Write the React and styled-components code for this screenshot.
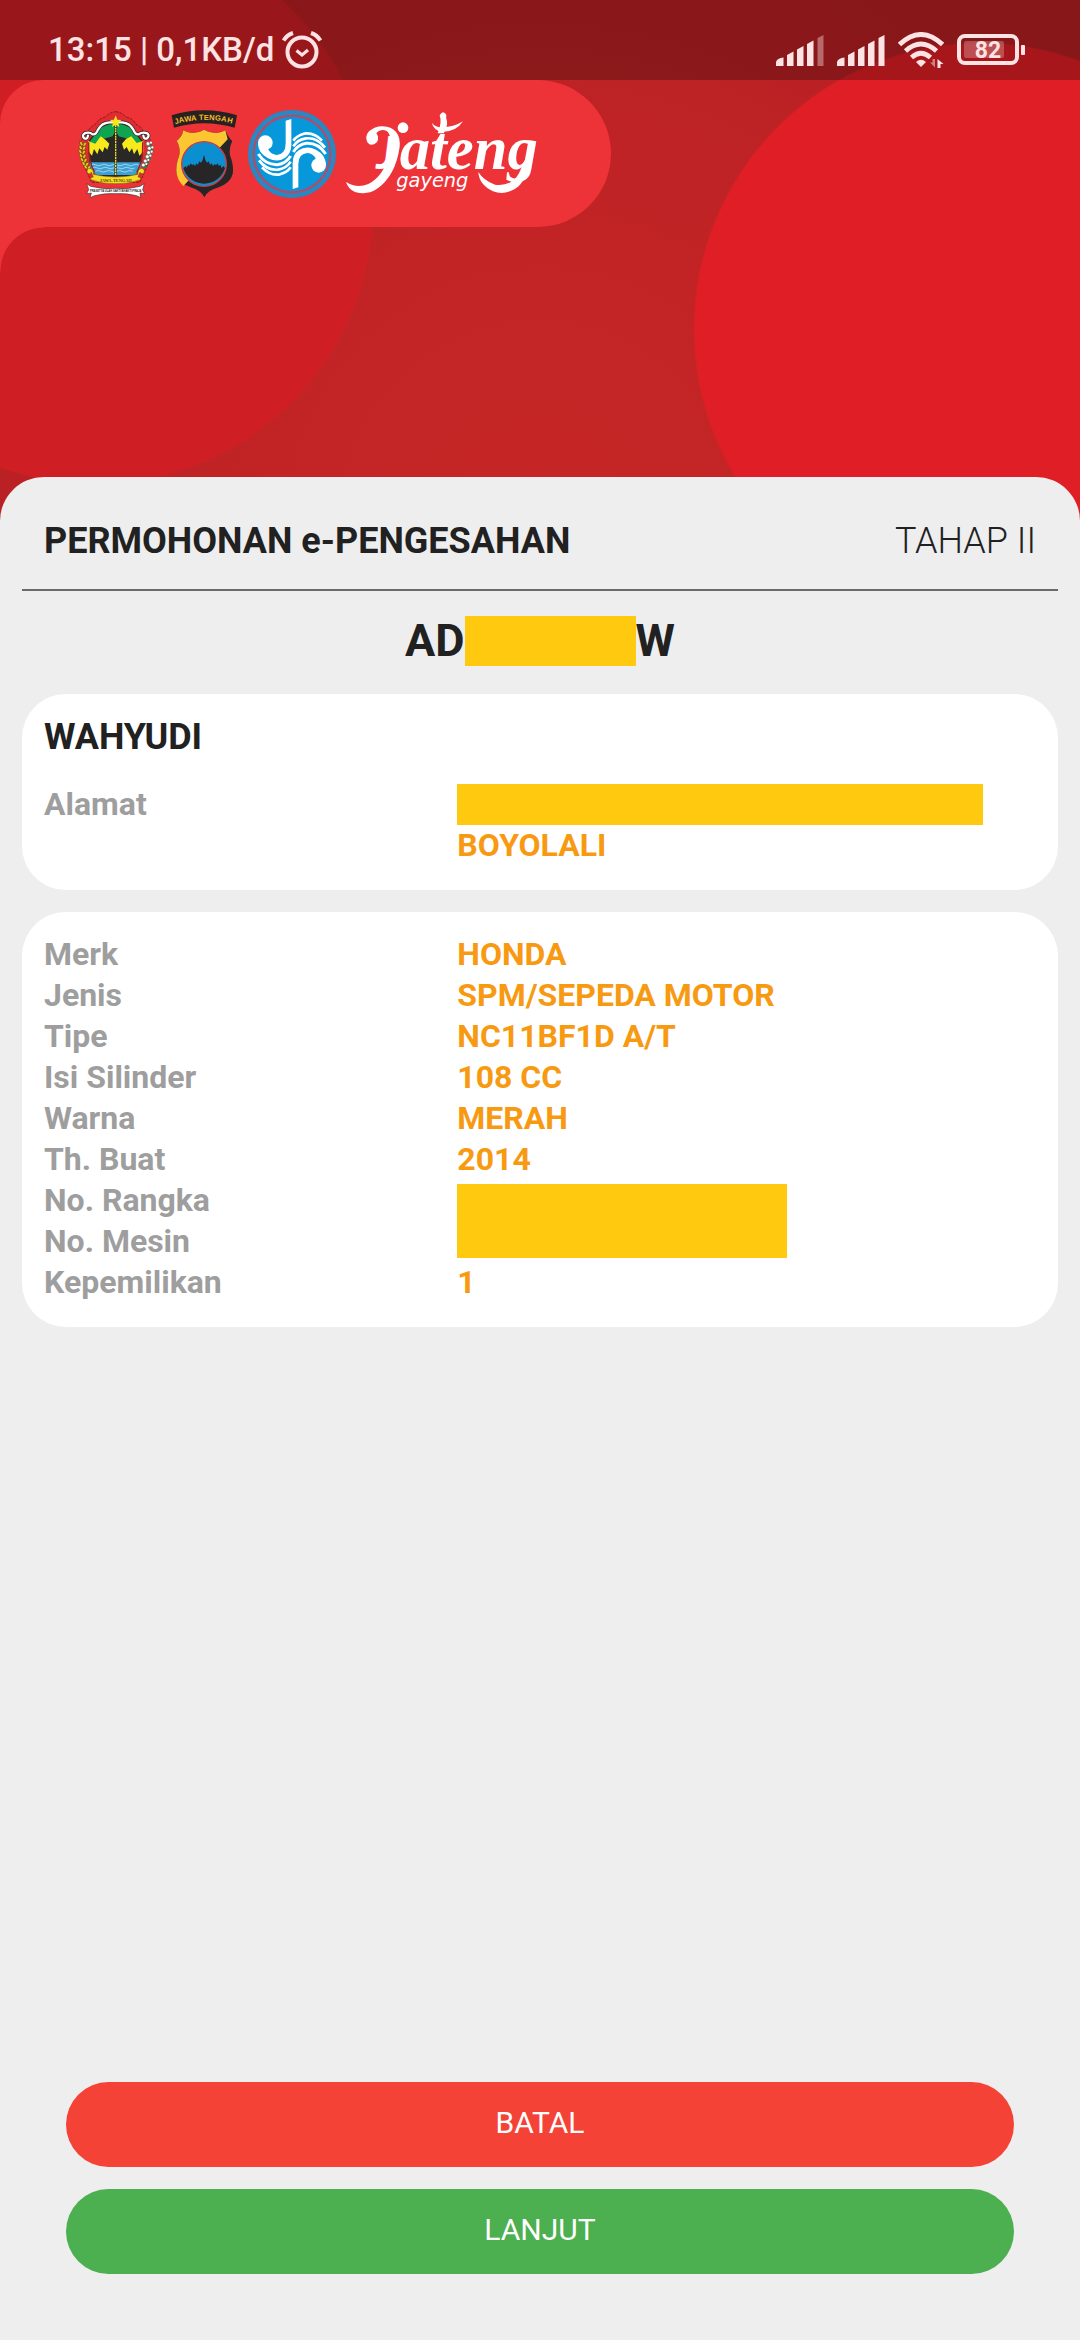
import React from "react";
import styled, { createGlobalStyle } from "styled-components";

const color = {
  sheet: "#eeeeee",
  card: "#ffffff",
  ink: "#212121",
  label: "#9e9e9e",
  value: "#f79a12",
  mask: "#fec90f",
  pill: "#ee3338",
  status: "#fde3e4",
  danger: "#f44336",
  success: "#4caf50",
};

const GlobalStyle = createGlobalStyle`
  * { box-sizing: border-box; }
  body {
    margin: 0;
    font-family: Roboto, "Liberation Sans", sans-serif;
    color: ${color.ink};
  }
`;

const Page = styled.div`
  min-height: 100vh;
  display: flex;
  flex-direction: column;
  background:
    radial-gradient(circle at right 100px top 329px, #e01e25 285px, transparent 287px),
    radial-gradient(circle at 95px 206px, #cf1f24 277px, transparent 279px),
    radial-gradient(circle at 50% 520px, #c62626 0, #c22425 280px, #b82024 620px);
`;

const StatusBar = styled.header`
  height: 80px;
  padding: 20px 55px 0 48px;
  display: flex;
  align-items: center;
  justify-content: space-between;
  background: rgba(0, 0, 0, 0.26);
  color: ${color.status};
`;

const StatusGroup = styled.div`
  display: flex;
  align-items: center;
  gap: ${(p) => p.$gap}px;
`;

const StatusText = styled.span`
  font-size: 33px;
  line-height: 40px;
  font-weight: 500;
`;

const Hero = styled.div`
  height: 397px;
`;

const LogoPill = styled.div`
  position: relative;
  width: 611px;
  max-width: 100%;
  height: 147px;
  padding-left: 78px;
  display: flex;
  align-items: center;
  background: ${color.pill};
  border-radius: 44px 74px 74px 0;

  &::after {
    content: "";
    position: absolute;
    left: 0;
    top: 100%;
    width: 44px;
    height: 44px;
    background: radial-gradient(circle at 100% 100%, transparent 43px, ${color.pill} 44px);
  }
`;

const LogoRow = styled.div`
  display: flex;
  align-items: center;
  gap: 10px;

  svg { overflow: visible; }
`;

const Sheet = styled.main`
  flex: 1;
  display: flex;
  flex-direction: column;
  padding: 16px 22px 66px;
  background: ${color.sheet};
  border-radius: 44px 44px 0 0;
`;

const TitleRow = styled.div`
  height: 98px;
  padding: 0 22px;
  display: flex;
  align-items: center;
  justify-content: space-between;
  border-bottom: 2px solid #6a6a6a;
`;

const Title = styled.h1`
  margin: 0;
  font-size: 36px;
  line-height: 42px;
  font-weight: 700;
`;

const Step = styled.span`
  font-size: 36px;
  line-height: 42px;
  font-weight: 300;
`;

const Plate = styled.div`
  margin: 25px 0 28px;
  display: flex;
  align-items: center;
  justify-content: center;
  font-size: 45px;
  line-height: 50px;
  font-weight: 700;
`;

const Mask = styled.span`
  display: block;
  width: ${(p) => p.$width}px;
  max-width: 100%;
  height: ${(p) => p.$height}px;
  background: ${color.mask};
`;

const Cards = styled.div`
  display: flex;
  flex-direction: column;
  gap: 22px;
`;

const Card = styled.section`
  padding: 22px 22px 24px;
  background: ${color.card};
  border-radius: 44px;
`;

const Owner = styled.h2`
  margin: 0 0 26px;
  font-size: 36px;
  line-height: 42px;
  font-weight: 700;
`;

const Details = styled.dl`
  margin: 0;
  display: grid;
  grid-template-columns: 5fr 7fr;
  font-size: 32px;
  line-height: 41px;
  font-weight: 700;
`;

const Term = styled.dt`
  grid-column: 1;
  color: ${color.label};
`;

const Value = styled.dd`
  grid-column: 2;
  grid-row-end: span ${(p) => p.$rows || 1};
  align-self: center;
  margin: 0;
  color: ${color.value};
`;

const Actions = styled.div`
  margin-top: auto;
  padding: 0 44px;
  display: flex;
  flex-direction: column;
  gap: 22px;
`;

const ActionButton = styled.button`
  height: 85px;
  padding: 0 0 4px;
  border: 0;
  border-radius: 43px;
  background: ${(p) => p.$color};
  color: #ffffff;
  font-family: inherit;
  font-size: 30px;
  font-weight: 400;
  cursor: pointer;
`;

function AlarmIcon() {
  return (
    <svg width="40" height="38" viewBox="0 0 40 38" fill="none" stroke="currentColor">
      <circle cx="20" cy="21" r="14.5" strokeWidth="4" />
      <path d="M1.500 9.500Q5 4 11 2M38.500 9.500Q35 4 29 2" strokeWidth="4" />
      <path d="M14.500 19.500l5.500 4.500 6-5" strokeWidth="3.200" />
    </svg>
  );
}

function SignalIcon({ weak }) {
  return (
    <svg width="48" height="32" viewBox="0 0 48 32" fill="currentColor">
      <path d="M0 32V28Q1 24 7.500 23.500V32Z" />
      <path d="M11 32V21l6.500-3.500V32Z" />
      <path d="M21 32V15.500l6.500-3.500V32Z" />
      <path d="M31 32V10l6.500-3.500V32Z" />
      <path d="M41.500 32V4L47.500 1V32Z" opacity={weak ? 0.4 : 1} />
    </svg>
  );
}

function WifiIcon() {
  return (
    <svg width="46" height="36" viewBox="0 0 46 36" fill="none" stroke="currentColor" strokeWidth="4.800">
      <path d="M1.500 12.500Q23-7.500 44.500 12.500" />
      <path d="M7.500 19Q23 5 38.500 19" />
      <path d="M13.500 25.500Q23 17 32.500 25.500" />
      <path d="M18 30q5-4.500 10 0l-5 5z" fill="currentColor" stroke="none" />
      <path d="M37 27v8.500L32 30.500h2.500V27Z" fill="currentColor" stroke="none" opacity="0.5" />
      <path d="M39.500 36V27l6 5H42.500v4Z" fill="currentColor" stroke="none" />
    </svg>
  );
}

function BatteryIcon() {
  return (
    <svg width="68" height="32" viewBox="0 0 68 32">
      <rect x="2" y="2" width="58" height="27" rx="6" fill="none" stroke="currentColor" strokeWidth="4" />
      <rect x="7" y="7" width="40" height="17" rx="2" fill="currentColor" opacity="0.28" />
      <rect x="64" y="11" width="4" height="10" rx="1" fill="currentColor" />
      <text x="31" y="24" textAnchor="middle" fontFamily="Roboto, sans-serif" fontSize="23" fontWeight="700" fill="currentColor">
        82
      </text>
    </svg>
  );
}

const riceGrains = [
  [64, 146], [62, 158], [61, 170], [63, 182], [66, 194], [71, 206], [77, 216],
];
const cottonBolls = [
  [268, 146], [272, 160], [270, 173], [266, 185], [260, 198], [254, 210],
];

function ProvinceEmblem() {
  return (
    <svg width="78" height="90" viewBox="54 42 234 270" role="img" aria-label="Jawa Tengah">
      <path
        d="M167 50Q186 52 198 66Q218 70 228 88Q246 96 252 114L276 140L262 212L240 262H95L72 212L60 140L82 114Q88 96 106 88Q116 70 136 66Q148 52 167 50Z"
        fill="#e02c30" stroke="#5b1416" strokeWidth="2" strokeDasharray="9 3"
      />
      <path d="M84 140L110 106L140 88L167 84L194 88L224 106L250 140L246 205L222 245H112L88 205Z" fill="#2a2826" />
      <path d="M88 142Q112 108 122 98L167 80L212 98Q228 118 246 142L230 150L206 132L176 124L167 108L158 124L128 132L104 150Z" fill="#0fa451" />
      <path d="M84 138L106 146L122 124L136 134L148 146L142 164L134 156L128 172L118 160L112 178L102 162L96 182L86 170Z" fill="#f6ea1c" />
      <path d="M250 138L230 144L214 124L198 132L186 146L192 164L200 156L208 172L216 160L222 178L232 162L238 182L250 170Z" fill="#f6ea1c" />
      <path d="M150 150L160 120L167 112L174 120L184 150Z" fill="#2a2826" />
      <path d="M88 202H246L240 226L224 240H110L94 226Z" fill="#3ba0d4" />
      <path
        d="M92 210q8-5 16 0t16 0 16 0 16 0 16 0 16 0 16 0 16 0 16 0M96 219q8-5 16 0t16 0 16 0 16 0 16 0 16 0 16 0 16 0M106 229q8-5 16 0t16 0 16 0 16 0 16 0 16 0 16 0"
        fill="none" stroke="#d5ecf7" strokeWidth="2"
      />
      <path
        d="M84 122Q82 134 73 130Q64 122 74 115Q88 110 98 118Q108 120 114 104Q124 84 148 82H186Q210 84 220 104Q226 120 236 118Q248 110 262 115Q270 122 261 130Q252 134 250 122"
        fill="none" stroke="#2d2a29" strokeWidth="11" strokeLinecap="round"
      />
      <path
        d="M84 122Q82 134 73 130Q64 122 74 115Q88 110 98 118Q108 120 114 104Q124 84 148 82H186Q210 84 220 104Q226 120 236 118Q248 110 262 115Q270 122 261 130Q252 134 250 122"
        fill="none" stroke="#ffffff" strokeWidth="7" strokeLinecap="round"
      />
      <path d="M167 90V240" stroke="#2a2826" strokeWidth="7" />
      <path d="M167 90V240" stroke="#f2dd22" strokeWidth="4" strokeDasharray="6 2" />
      <path d="M167 61L172 74L184 75L175 83L178 96L167 89L156 96L159 83L150 75L162 74Z" fill="#f8e71e" />
      <path
        d="M86 142Q84 200 104 232M248 142Q250 200 230 232"
        fill="none" stroke="#a01f22" strokeWidth="4"
      />
      {riceGrains.map(([x, y]) => (
        <g key={y} fill="#e9c91e" stroke="#4a3510" strokeWidth="1.500">
          <ellipse cx={x} cy={y} rx="4" ry="7" transform={`rotate(-35 ${x} ${y})`} />
          <ellipse cx={x + 10} cy={y + 2} rx="4" ry="7" transform={`rotate(30 ${x + 10} ${y + 2})`} />
        </g>
      ))}
      {cottonBolls.map(([x, y]) => (
        <g key={y}>
          <ellipse cx={x} cy={y + 4} rx="11" ry="4" fill="#1d8a45" transform={`rotate(30 ${x} ${y})`} />
          <circle cx={x - 4} cy={y} r="5.500" fill="#ffffff" stroke="#333" strokeWidth="1" />
          <circle cx={x + 5} cy={y - 3} r="4" fill="#ffffff" stroke="#333" strokeWidth="1" />
        </g>
      ))}
      <path
        d="M90 220Q78 222 82 234Q88 240 94 232L100 246Q90 246 92 254Q130 268 167 266Q204 268 242 254Q244 246 234 246L240 232Q246 240 252 234Q256 222 244 220Q232 224 234 238Q200 246 167 246Q134 246 100 238Q102 224 90 220Z"
        fill="#f4df20" stroke="#5b4a10" strokeWidth="1.500"
      />
      <text x="167" y="260" textAnchor="middle" fontFamily="Liberation Serif, serif" fontSize="13" fontWeight="700" fill="#4a3c0a">
        JAWA-TENGAH
      </text>
      <path
        d="M80 266L92 274Q130 284 167 280Q204 284 240 274L253 266L248 284L254 296L240 294L242 308L230 302Q198 294 167 296Q136 294 104 302L90 308L94 294L80 296L86 284Z"
        fill="#ffffff" stroke="#3a3433" strokeWidth="2"
      />
      <text x="167" y="291" textAnchor="middle" fontFamily="Liberation Sans, sans-serif" fontSize="8" fontWeight="700" fill="#2a2626">
        PRASETYA ULAH SAKTI BHAKTI PRAJA
      </text>
    </svg>
  );
}

function PoliceEmblem() {
  return (
    <svg width="72" height="90" viewBox="318 37 216 270" role="img" aria-label="Jawa Tengah">
      <path d="M335 56Q432 26 531 56L524 93Q432 66 342 93Z" fill="#27211f" />
      <text
        x="346 358 374 394 410 417 431 447 464 482 500"
        y="83 79 76 73 71 70 70 70 71 73 77"
        rotate="-16 -13 -10 -7 -4 -3 0 3 6 10 13"
        fontFamily="Liberation Sans, sans-serif" fontSize="23" fontWeight="700" fill="#f6bb2e"
      >
        JAWA TENGAH
      </text>
      <path
        d="M370 101Q388 112 404 108Q422 106 432 99Q444 106 460 108Q478 112 496 101L503 116Q512 130 517 133Q506 156 510 176Q522 206 518 232Q512 258 476 272Q444 280 433 302Q422 280 392 272Q356 258 350 232Q346 206 358 176Q362 152 350 132Q366 122 370 101Z"
        fill="#272525"
      />
      <path
        d="M370 101Q388 112 404 108Q422 106 432 99Q444 106 460 108Q478 112 496 101L503 128L370 268Q354 252 350 232Q346 206 358 176Q362 152 350 132Q366 122 370 101Z"
        fill="#fcc632"
      />
      <circle cx="432" cy="202" r="67" fill="#0b8fd0" stroke="#d5383d" strokeWidth="4" />
      <path
        d="M370 214L378 208L380 214L384 204L388 208L392 200L397 206L401 202L405 208L410 200L414 204L418 194L423 198L428 190L432 174L436 190L441 198L446 194L450 204L455 200L459 208L464 202L468 206L472 200L477 208L481 204L485 214L490 208L495 214A65 65 0 0 1 370 214Z"
        fill="#272525"
      />
    </svg>
  );
}

function RoundelHalf() {
  return (
    <g fill="none" stroke="#ffffff">
      <path d="M151 81L168 76V154H151Z" fill="#ffffff" stroke="none" />
      <circle cx="90" cy="147" r="22" fill="#ffffff" stroke="none" />
      <path d="M68 148Q68 178 98 194Q128 208 150 192Q168 180 168 152H151Q150 182 124 184Q106 182 98 166Z" fill="#ffffff" stroke="none" />
      <path d="M69 181Q90 214 126 213Q152 210 166 187" strokeWidth="9" />
      <path d="M71 200Q94 231 128 228Q154 224 166 204" strokeWidth="8" />
      <path d="M80 221Q104 247 134 242Q156 236 166 221" strokeWidth="8" />
    </g>
  );
}

function RoundelLogo() {
  return (
    <svg width="88" height="90" viewBox="38 46 264 270" role="img" aria-label="Jasa Raharja">
      <circle cx="170" cy="181" r="132" fill="#2a87c1" />
      <circle cx="170" cy="181" r="115" fill="none" stroke="#c8425a" strokeWidth="5" />
      <circle cx="170" cy="181" r="109" fill="#0798dc" />
      <RoundelHalf />
      <g transform="rotate(180 170 181)">
        <RoundelHalf />
      </g>
    </svg>
  );
}

function JatengLogo() {
  return (
    <svg width="190" height="90" viewBox="333 43 570 270" role="img" aria-label="Jateng gayeng">
      <path
        d="M333 262Q366 282 400 268Q446 244 462 180Q474 120 454 108Q436 102 424 116Q434 128 426 142Q412 158 398 144Q388 126 402 110Q424 90 456 96Q498 106 494 156Q482 244 424 284Q396 302 360 292Q340 284 333 262Z"
        fill="#ffffff"
      />
      <circle cx="504" cy="99" r="16" fill="#ffffff" />
      <path d="M590 84Q602 100 628 98Q658 96 684 80Q664 112 620 112Q596 106 590 84Z" fill="#ffffff" />
      <path d="M614 62Q624 44 634 60Q632 68 636 80Q638 98 626 116H608Q622 84 614 62Z" fill="#ffffff" />
      <path d="M730 232Q746 258 780 270Q830 276 852 236L872 190L888 186Q876 262 838 284Q806 302 774 290Q732 270 730 232Z" fill="#ffffff" />
      <text y="222" fontFamily="Liberation Serif, serif" fontSize="182" fontWeight="700" fontStyle="italic" fill="#ffffff">
        <tspan x="424" fontFamily="Lato, sans-serif" fontSize="140">J</tspan>
        <tspan x="494">ateng</tspan>
        <tspan x="484" y="278" fontFamily="DejaVu Sans, sans-serif" fontSize="58" fontWeight="400">gayeng</tspan>
      </text>
    </svg>
  );
}

export default function App() {
  return (
    <Page>
      <GlobalStyle />
      <StatusBar>
        <StatusGroup $gap={8}>
          <StatusText>13:15 | 0,1KB/d</StatusText>
          <AlarmIcon />
        </StatusGroup>
        <StatusGroup $gap={13}>
          <SignalIcon weak />
          <SignalIcon />
          <WifiIcon />
          <BatteryIcon />
        </StatusGroup>
      </StatusBar>

      <Hero>
        <LogoPill>
          <LogoRow>
            <ProvinceEmblem />
            <PoliceEmblem />
            <RoundelLogo />
            <JatengLogo />
          </LogoRow>
        </LogoPill>
      </Hero>

      <Sheet>
        <TitleRow>
          <Title>PERMOHONAN e-PENGESAHAN</Title>
          <Step>TAHAP II</Step>
        </TitleRow>

        <Plate>
          <span>AD</span>
          <Mask $width={171} $height={50} />
          <span>W</span>
        </Plate>

        <Cards>
          <Card>
            <Owner>WAHYUDI</Owner>
            <Details>
              <Term>Alamat</Term>
              <Value>
                <Mask $width={526} $height={41} />
                BOYOLALI
              </Value>
            </Details>
          </Card>

          <Card>
            <Details>
              <Term>Merk</Term>
              <Value>HONDA</Value>
              <Term>Jenis</Term>
              <Value>SPM/SEPEDA MOTOR</Value>
              <Term>Tipe</Term>
              <Value>NC11BF1D A/T</Value>
              <Term>Isi Silinder</Term>
              <Value>108 CC</Value>
              <Term>Warna</Term>
              <Value>MERAH</Value>
              <Term>Th. Buat</Term>
              <Value>2014</Value>
              <Term>No. Rangka</Term>
              <Value $rows={2}>
                <Mask $width={330} $height={74} />
              </Value>
              <Term>No. Mesin</Term>
              <Term>Kepemilikan</Term>
              <Value>1</Value>
            </Details>
          </Card>
        </Cards>

        <Actions>
          <ActionButton type="button" $color={color.danger}>BATAL</ActionButton>
          <ActionButton type="button" $color={color.success}>LANJUT</ActionButton>
        </Actions>
      </Sheet>
    </Page>
  );
}
